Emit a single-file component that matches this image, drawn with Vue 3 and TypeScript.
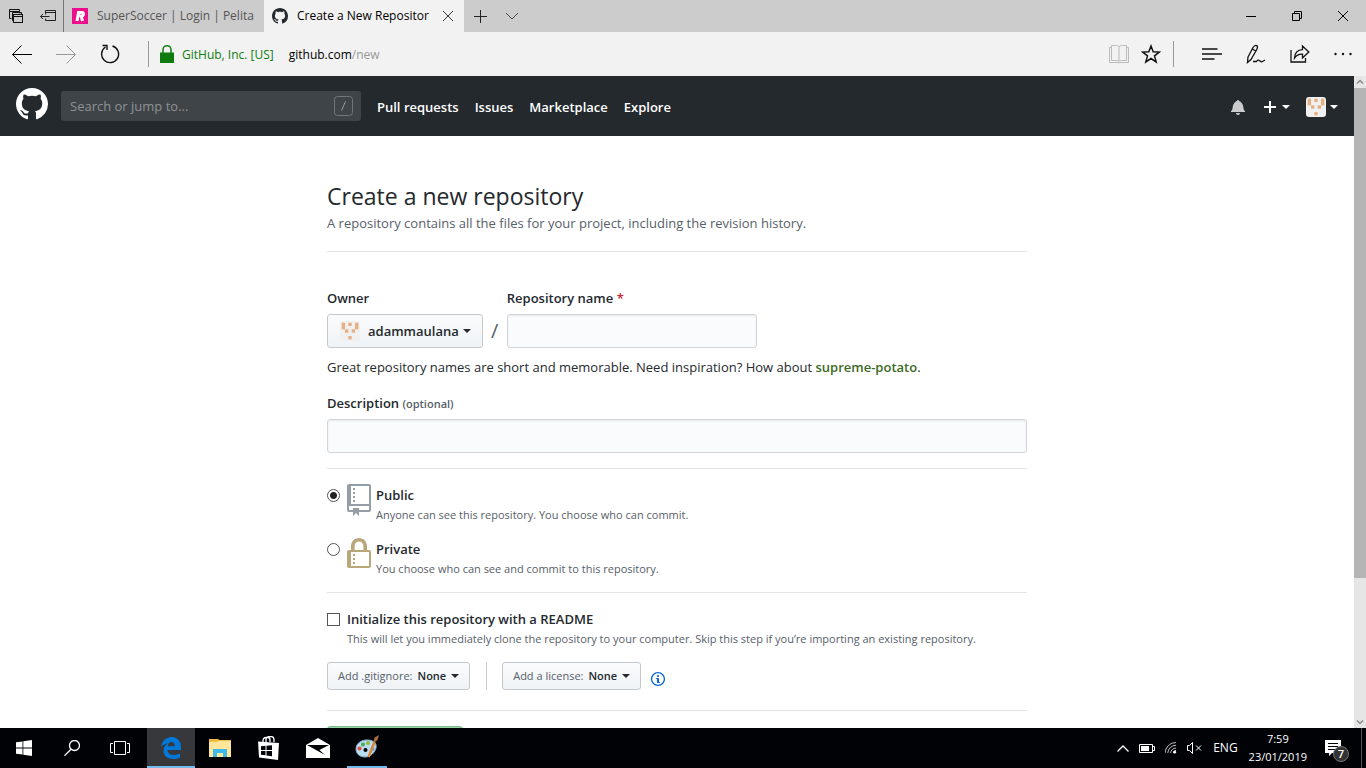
<script setup lang="ts">
import { ref } from 'vue'

interface Cell { x: number; y: number }

const identicon: Cell[] = [
  { x: 0, y: 0 }, { x: 0, y: 1 }, { x: 2, y: 0 }, { x: 4, y: 0 }, { x: 4, y: 1 },
  { x: 1, y: 2 }, { x: 3, y: 2 }, { x: 2, y: 4 },
]
const navLinks: string[] = ['Pull requests', 'Issues', 'Marketplace', 'Explore']
const visibility = ref<'public' | 'private'>('public')
const repoName = ref('')
const description = ref('')
const search = ref('')
const readme = ref(false)
const markPath = 'M8 0C3.58 0 0 3.58 0 8c0 3.54 2.29 6.53 5.47 7.59.4.07.55-.17.55-.38 0-.19-.01-.82-.01-1.49-2.01.37-2.53-.49-2.69-.94-.09-.23-.48-.94-.82-1.13-.28-.15-.68-.52-.01-.53.63-.01 1.08.58 1.23.82.72 1.21 1.87.87 2.33.66.07-.52.28-.87.51-1.07-1.78-.2-3.64-.89-3.64-3.95 0-.87.31-1.59.82-2.15-.08-.2-.36-1.02.08-2.12 0 0 .67-.21 2.2.82.64-.18 1.32-.27 2-.27.68 0 1.36.09 2 .27 1.53-1.04 2.2-.82 2.2-.82.44 1.1.16 1.92.08 2.12.51.56.82 1.27.82 2.15 0 3.07-1.87 3.75-3.65 3.95.29.25.54.73.54 1.48 0 1.07-.01 1.93-.01 2.2 0 .21.15.46.55.38A8.013 8.013 0 0 0 16 8c0-4.42-3.58-8-8-8z'
</script>

<template>
  <div class="screen">
    <div class="tabs">
      <div class="tab-tools">
        <button class="icon-btn" aria-label="Tabs you've set aside">
          <svg width="16" height="16" viewBox="0 0 16 16" fill="none" stroke="#111"><path d="M3.500 10.500h-2v-9h10v2M1.500 3.500h10M12 5.500v-.5M6.500 12.500h-2v-8h9v2" /><rect x="5.500" y="6.500" width="9" height="8" fill="#ccc" /><path d="M5.500 8.500h9" /></svg>
        </button>
        <button class="icon-btn" aria-label="Set these tabs aside">
          <svg width="18" height="16" viewBox="0 0 18 16" fill="none" stroke="#222"><path d="M6.500 6.500v-4h10v10h-10v-2M6.500 4.500h10M1.500 8.500h9M4 6l-2.500 2.500L4 11" /></svg>
        </button>
      </div>
      <button class="tab">
        <svg width="16" height="16" viewBox="0 0 16 16"><path fill="#ec0f8c" d="M0 0h16v16H0z" /><path fill="none" stroke="#fff" stroke-width="3" d="M5 13 6.500 4.500h3.700c1.800 0 1.600 3.500-.8 3.500H7.500M9.200 8l1.300 5" /></svg>
        <span>SuperSoccer | Login | Pelita</span>
      </button>
      <div class="tab active">
        <svg width="16" height="16" viewBox="0 0 16 16"><path fill="#24292e" :d="markPath" /></svg>
        <span>Create a New Repositor</span>
        <button class="icon-btn close" aria-label="Close tab">
          <svg width="12" height="12" viewBox="0 0 12 12" stroke="#333" fill="none"><path d="M1 1l10 10M11 1L1 11" /></svg>
        </button>
      </div>
      <button class="icon-btn newtab" aria-label="New tab">
        <svg width="13" height="13" viewBox="0 0 13 13" stroke="#222" fill="none"><path d="M6.500 0v13M0 6.500h13" /></svg>
      </button>
      <button class="icon-btn preview" aria-label="Show tab previews">
        <svg width="14" height="8" viewBox="0 0 14 8" stroke="#444" fill="none"><path d="M1 1l6 6 6-6" /></svg>
      </button>
      <div class="window-btns">
        <button aria-label="Minimize"><svg width="10" height="10" viewBox="0 0 10 10" stroke="#000"><path d="M0 5.500h10" /></svg></button>
        <button aria-label="Restore"><svg width="10" height="10" viewBox="0 0 10 10" stroke="#000" fill="none"><path d="M.5 2.500h7v7h-7zM2.500 2.500v-2h7v7h-2" /></svg></button>
        <button aria-label="Close"><svg width="10" height="10" viewBox="0 0 10 10" stroke="#000" fill="none"><path d="M0 0l10 10M10 0L0 10" /></svg></button>
      </div>
    </div>

    <div class="address">
      <button class="icon-btn" aria-label="Back"><svg width="20" height="20" viewBox="0 0 20 20" stroke="#000" fill="none"><path d="M.7 10.500H20M9.500 1.500l-9 9 9 9" /></svg></button>
      <button class="icon-btn" aria-label="Forward"><svg width="20" height="20" viewBox="0 0 20 20" stroke="#999" fill="none"><path d="M0 10.500h19.300M10.500 1.500l9 9-9 9" /></svg></button>
      <button class="icon-btn" aria-label="Refresh"><svg width="20" height="20" viewBox="0 0 20 20" stroke="#111" stroke-width="1.400" fill="none"><path d="M12.500 2A8.500 8.500 0 1 1 5.500 3M2.500 1.500h4.500v4.500" /></svg></button>
      <span class="bar-rule"></span>
      <svg class="lock" width="14" height="18" viewBox="0 0 14 18"><path d="M3 8V4.500a4 3.700 0 0 1 8 0V8" fill="none" stroke="#107c10" stroke-width="1.500" /><path d="M0 7.500h14V18H0z" fill="#107c10" /></svg>
      <span class="cert">GitHub, Inc. [US]</span>
      <span class="url">github.com<i>/new</i></span>
      <div class="tools">
        <button class="icon-btn" aria-label="Reading view"><svg width="20" height="20" viewBox="0 0 20 20" fill="none" stroke="#bbb"><path d="M2.500 1.500h5q2 0 2.500 1.500 .5-1.500 2.500-1.500h5v15h-5q-2 0-2.500 1-.5-1-2.500-1h-5zM10 3v14M2 3.500H.5v15h8.500q1 .8 2 0h8.500v-15H18" /></svg></button>
        <button class="icon-btn" aria-label="Add to favorites"><svg width="20" height="20" viewBox="0 0 20 20" fill="none" stroke="#111" stroke-width="1.500"><path d="M10 2l2.200 5.800 6.100.3-4.800 3.800 1.700 6L10 14.500l-5.200 3.400 1.700-6-4.800-3.800 6.100-.3z" /></svg></button>
        <span class="bar-rule"></span>
        <button class="icon-btn" aria-label="Hub"><svg width="20" height="12" viewBox="0 0 20 12" stroke="#111" stroke-width="1.300"><path d="M0 1h15.500M0 6h20M0 11h12.500" /></svg></button>
        <button class="icon-btn" aria-label="Make a web note"><svg width="20" height="20" viewBox="0 0 20 20" fill="none" stroke="#111" stroke-width="1.300"><path d="M2 13 7 3.500Q9 .5 10.700 1.600T10.500 6L5 15.500l-3.500 3zM6.300 5l3.500 2M7 17.500h3.500q1.500-2.300 3.200-.8t2.800.8 2.500-1.300" /></svg></button>
        <button class="icon-btn" aria-label="Share"><svg width="20" height="20" viewBox="0 0 20 20" fill="none" stroke="#111" stroke-width="1.300"><path d="M1 6v12h14.500v-4M4.500 14q.5-8 8-8.300V2l6.300 6-6.300 6v-3.800q-5-.4-8 3.800z" /></svg></button>
        <button class="icon-btn" aria-label="More"><svg width="18" height="4" viewBox="0 0 18 4" fill="#111"><circle cx="1.500" cy="2" r="1.200" /><circle cx="9" cy="2" r="1.200" /><circle cx="16.500" cy="2" r="1.200" /></svg></button>
      </div>
    </div>

    <div class="viewport">
      <div class="page">
        <header class="gh-header">
          <a href="#" aria-label="GitHub"><svg class="block" width="32" height="32" viewBox="0 0 16 16"><path fill="#fff" :d="markPath" /></svg></a>
          <div class="search">
            <input v-model="search" type="text" aria-label="Search" placeholder="Search or jump to..." />
            <svg width="19" height="20" viewBox="0 0 19 20" fill="none" stroke="#6f757a"><rect x=".5" y=".5" width="18" height="19" rx="3" /><path d="M11.500 5.500l-4 9" stroke="#979da2" /></svg>
          </div>
          <nav>
            <a v-for="link in navLinks" :key="link" href="#">{{ link }}</a>
          </nav>
          <div class="user-tools">
            <button class="icon-btn bell" aria-label="Notifications"><svg width="14" height="16" viewBox="0 0 14 16"><path fill="#c9cbcd" d="M13.990 11.991v1H0v-1l.73-.58c.769-.769.809-2.547 1.189-4.416.77-3.767 4.077-4.996 4.077-4.996 0-.55.45-1 .999-1 .55 0 1 .45 1 1 0 0 3.387 1.229 4.156 4.996.38 1.879.42 3.657 1.190 4.417l.659.58h-.01zM6.995 15.990c1.110 0 1.999-.89 1.999-1.999H4.996c0 1.110.89 1.999 1.999 1.999z" /></svg></button>
            <button class="icon-btn" aria-label="Create new"><svg width="12" height="12" viewBox="0 0 12 12" stroke="#fff" stroke-width="2"><path d="M6 0v12M0 6h12" /></svg><span class="caret"></span></button>
            <button class="icon-btn profile" aria-label="View profile"><svg width="20" height="20" viewBox="0 0 20 20"><rect width="20" height="20" rx="3" fill="#f0f0f0" /><rect v-for="(c, i) in identicon" :key="i" :x="1.700 + c.x * 3.330" :y="1.700 + c.y * 3.330" width="3.330" height="3.330" fill="#e6af82" /></svg><span class="caret"></span></button>
          </div>
        </header>

        <form class="form" @submit.prevent>
          <div class="heading">
            <h1>Create a new repository</h1>
            <p>A repository contains all the files for your project, including the revision history.</p>
          </div>

          <div class="name-row">
            <div class="field">
              <label for="owner">Owner</label>
              <button id="owner" type="button" class="btn owner" aria-haspopup="true">
                <svg width="20" height="20" viewBox="0 0 20 20"><rect width="20" height="20" rx="3" fill="#f0f0f0" /><rect v-for="(c, i) in identicon" :key="i" :x="1.700 + c.x * 3.330" :y="1.700 + c.y * 3.330" width="3.330" height="3.330" fill="#e6af82" /></svg>
                <b>adammaulana</b><span class="caret"></span>
              </button>
            </div>
            <span class="slash">/</span>
            <div class="field">
              <label for="repo">Repository name <em>*</em></label>
              <input id="repo" v-model="repoName" type="text" class="text repo" />
            </div>
          </div>
          <p class="note">Great repository names are short and memorable. Need inspiration? How about <b>supreme-potato</b>.</p>

          <div class="field desc">
            <label for="desc">Description <small>(optional)</small></label>
            <input id="desc" v-model="description" type="text" class="text" />
          </div>

          <div class="section choices">
            <div class="choice">
              <input id="public" v-model="visibility" type="radio" name="visibility" value="public" />
              <svg width="24" height="32" viewBox="0 0 12 16"><path fill="#959da5" d="M4 9H3V8h1v1zm0-3H3v1h1V6zm0-2H3v1h1V4zm0-2H3v1h1V2zm8-1v12c0 .55-.45 1-1 1H6v2l-1.500-1.500L3 16v-2H1c-.55 0-1-.45-1-1V1c0-.55.45-1 1-1h10c.55 0 1 .45 1 1zm-1 10H1v2h2v-1h3v1h5v-2zm0-10H2v9h9V1z" /></svg>
              <div><label for="public">Public</label><p>Anyone can see this repository. You choose who can commit.</p></div>
            </div>
            <div class="choice">
              <input id="private" v-model="visibility" type="radio" name="visibility" value="private" />
              <svg width="24" height="32" viewBox="0 0 12 16"><path fill="#b9a779" d="M4 13H3v-1h1v1zm8-6v7c0 .55-.45 1-1 1H1c-.55 0-1-.45-1-1V7c0-.55.45-1 1-1h1V4c0-2.200 1.800-4 4-4s4 1.800 4 4v2h1c.55 0 1 .45 1 1zM3.800 6h4.410V4c0-1.220-.98-2.200-2.200-2.200-1.220 0-2.200.98-2.200 2.200v2H3.800zM11 7H2v7h9V7zM4 8H3v1h1V8zm0 2H3v1h1v-1z" /></svg>
              <div><label for="private">Private</label><p>You choose who can see and commit to this repository.</p></div>
            </div>
          </div>

          <div class="section init">
            <div class="choice readme">
              <input id="readme" v-model="readme" type="checkbox" />
              <div><label for="readme">Initialize this repository with a README</label><p>This will let you immediately clone the repository to your computer. Skip this step if you’re importing an existing repository.</p></div>
            </div>
            <div class="menus">
              <button type="button" class="btn small" aria-haspopup="true">Add .gitignore: <b>None</b><span class="caret"></span></button>
              <span class="divider"></span>
              <button type="button" class="btn small" aria-haspopup="true">Add a license: <b>None</b><span class="caret"></span></button>
              <svg class="info" width="14" height="16" viewBox="0 0 14 16"><path fill="#0366d6" d="M6.300 5.690a.942.942 0 0 1-.28-.7c0-.28.09-.52.28-.7.19-.18.42-.28.7-.28.28 0 .52.09.7.28.18.19.28.42.28.7 0 .28-.09.52-.28.7a1 1 0 0 1-.7.3c-.28 0-.52-.11-.7-.3zM8 7.990c-.02-.25-.11-.48-.31-.69-.2-.19-.42-.3-.69-.31H6c-.27.02-.48.13-.69.31-.2.2-.3.44-.31.69h1v3c.02.27.11.5.31.69.2.2.42.31.69.31h1c.27 0 .48-.11.69-.31.2-.19.3-.42.31-.69H8V7.980v.01zM7 2.300c-3.140 0-5.700 2.540-5.700 5.680 0 3.140 2.560 5.700 5.700 5.700s5.700-2.550 5.700-5.700c0-3.150-2.560-5.690-5.700-5.690v.01zM7 .98c3.860 0 7 3.140 7 7s-3.140 7-7 7-7-3.120-7-7 3.140-7 7-7z" /></svg>
            </div>
          </div>

          <div class="section submit-row">
            <button type="submit" class="submit" disabled aria-label="Create repository"></button>
          </div>
        </form>
      </div>
      <div class="scrollbar">
        <svg width="12" height="12" viewBox="0 0 12 12" fill="none" stroke="#8a8a8a" stroke-width="1.500"><path d="M3 7.500l3-3 3 3" /></svg>
        <div class="track"><div class="thumb"></div></div>
        <svg width="12" height="12" viewBox="0 0 12 12" fill="none" stroke="#8a8a8a" stroke-width="1.500"><path d="M3 4.500l3 3 3-3" /></svg>
      </div>
    </div>

    <div class="taskbar">
      <button class="task" aria-label="Start"><svg width="16" height="16" viewBox="0 0 16 16" fill="#fff"><path d="M0 2.300 6.500 1.400v6.200H0zM7.300 1.300 16 0v7.600H7.300zM0 8.400h6.500v6.200L0 13.700zM7.300 8.400H16V16l-8.700-1.300z" /></svg></button>
      <button class="task" aria-label="Search"><svg width="16" height="16" viewBox="0 0 16 16" fill="none" stroke="#fff" stroke-width="1.300"><circle cx="10.500" cy="5.500" r="5" /><path d="M7 9.200.5 15.700" /></svg></button>
      <button class="task" aria-label="Task view"><svg width="20" height="14" viewBox="0 0 20 14" fill="none" stroke="#fff"><path d="M4.500.5h11v13h-11zM3 2.500H.5v9H3M17 2.500h2.500v9H17" /></svg></button>
      <button class="task open" aria-label="Microsoft Edge"><svg width="20" height="22" viewBox="0 0 20 22" fill="#0078d7"><path d="M0 10C1.200 3.500 5.500 0 10.500 0 16.500 0 20 4.500 20 10v3H6.500c.3 3.800 3.500 5 6.500 5 2.500 0 4.300-.6 6-1.700v4.200c-2.200 1-4.500 1.500-7.200 1.500C5.500 22 2.500 18 2.500 13.800 2.500 10.500 4.200 7.800 7 6.300 4 6.700 1.600 8 0 10zm6.700-.8h7.200C13.900 6.500 12.700 5 10.500 5 8.300 5 7 6.700 6.700 9.200z" /></svg></button>
      <button class="task explorer" aria-label="File Explorer"><svg width="22" height="18" viewBox="0 0 22 18"><path fill="#f0bd44" d="M0 0h9l1.500 1H22v3H0z" /><path fill="#ffe69b" d="M0 3h8l2-1h12v16H0z" /><path fill="#3db8ea" d="M4 10h14v8h-4v-4H8v4H4z" /></svg></button>
      <button class="task" aria-label="Microsoft Store"><svg width="22" height="24" viewBox="0 0 22 24"><path fill="none" stroke="#fff" stroke-width="1.300" d="M5 7V5q0-3.500 3-3.500h2Q12 1.500 12 4v2M8 6V3.500Q8.500.7 11 .7h2.500Q16 .7 16 4v2" /><path fill="#fff" d="M0 5.500 21 7l-1 17L1 21.500z" /><path fill="#000206" d="M3 10.300 7.500 9.800v4.300H3zM8.500 9.700l5.500-.5v4.900H8.500zM3 15h4.500v4.300L3 18.700zM8.500 15H14v5.200l-5.500-.8z" /></svg></button>
      <button class="task" aria-label="Mail"><svg width="24" height="20" viewBox="0 0 24 20"><path fill="#fff" d="M0 7 12 0l12 7v13H0z" /><path fill="#000206" d="M1 7h22l-9.500 5L19 17z" /></svg></button>
      <button class="task paint" aria-label="Paint"><svg width="24" height="24" viewBox="0 0 24 24"><path fill="#b9dcf0" stroke="#83afd0" d="M1 14C1 8 7 4.500 13 5c7 .5 9 4.500 8 8-1 4-5 9-11 9-5 0-9-3-9-8z" /><circle cx="4.500" cy="13.500" r="2" fill="#df4d3e" /><circle cx="8" cy="9.500" r="2" fill="#4da853" /><circle cx="13" cy="8" r="2" fill="#8dbb3c" /><circle cx="10.500" cy="15" r="2" fill="#000206" /><circle cx="17.500" cy="14" r="2" fill="#5aa3d8" /><path stroke="#dd8739" stroke-width="2.500" d="M13.500 22 19.500 7" /><path fill="#a66a3c" d="m18.500 6 1-3.500L24 0l-1.500 5-3 2.500z" /></svg></button>
      <div class="tray">
        <div class="status">
          <svg width="12" height="7" viewBox="0 0 12 7" fill="none" stroke="#fff" stroke-width="1.300"><path d="M.5 6.500 6 1l5.500 5.500" /></svg>
          <svg width="16" height="9" viewBox="0 0 16 9"><path fill="none" stroke="#fff" d="M.5.500h13v8H.5zM14 2.500h1.500v4H14" /><path fill="#fff" d="M2 2h8v5H2z" /></svg>
          <svg width="12" height="12" viewBox="1 1 13 13" fill="none" stroke="#ccc"><path d="M1 13A12 12 0 0 1 13 1.500M4 13a9 9 0 0 1 9-8.500M7 13a6 6 0 0 1 6-5.500" /><path d="M10 13a3 3 0 0 1 3-3" /><circle cx="11.500" cy="12" r="1.500" fill="#fff" stroke="none" /></svg>
          <svg width="15" height="12" viewBox="0 0 15 12" fill="none" stroke="#fff"><path d="M.5 3.500h2l3-3v11l-3-3h-2zM9 3.500l5 5M14 3.500l-5 5" /></svg>
        </div>
        <span class="lang">ENG</span>
        <div class="clock"><span>7:59</span><span>23/01/2019</span></div>
        <button class="notice" aria-label="7 new notifications">
          <svg width="16" height="16" viewBox="0 0 16 16"><path fill="#fff" d="M0 0h16v13H7l-3 3v-3H0z" /><path stroke="#000206" d="M3 3.500h10M3 6.500h10M3 9.500h7" /></svg>
          <span class="count">7</span>
        </button>
        <span class="peek"></span>
      </div>
    </div>
  </div>
</template>

<style>
html, body { margin: 0; }
</style>

<style scoped>
.screen, .screen * { box-sizing: border-box; }
.screen { height: 100vh; display: flex; flex-direction: column; overflow: hidden; font-family: "Segoe UI", "Open Sans", "Noto Sans", sans-serif; font-size: 13px; line-height: 20px; color: #24292e; background: #fff; }
button { font: inherit; color: inherit; border: 0; background: none; padding: 0; margin: 0; }
svg { flex: none; }
p, h1 { margin: 0; }
b, label { font-weight: 600; }
a { text-decoration: none; color: inherit; }
.block { display: block; }
.icon-btn { display: flex; align-items: center; gap: 6px; }

.tabs { flex: none; height: 32px; display: flex; background: #ccc; font-size: 12px; color: #555; white-space: nowrap; }
.tab-tools { display: flex; align-items: center; gap: 15px; width: 64px; padding-left: 8px; border-right: 1px solid #777; }
.tab { display: flex; align-items: center; gap: 9px; width: 200px; padding-left: 8px; text-align: left; }
.tab.active { background: #f2f2f2; color: #000; }
.tab.active .close { margin-left: auto; padding-right: 10px; }
.newtab { margin-left: 10px; }
.preview { margin-left: 18px; }
.window-btns { margin-left: auto; display: flex; }
.window-btns button { width: 46px; display: flex; align-items: center; justify-content: center; }

.address { flex: none; height: 44px; display: flex; align-items: center; padding: 0 14px 0 12px; background: #f2f2f2; font-size: 12px; line-height: 22px; }
.address > .icon-btn { margin-right: 24px; }
.bar-rule { width: 1px; height: 26px; background: #999; }
.address > .bar-rule { margin-left: 4px; }
.lock { margin: 0 8px 0 11px; }
.cert { color: #107c10; margin-right: 15px; padding-top: 1px; }
.url { color: #000; padding-top: 1px; }
.url i { font-style: normal; color: #999; }
.tools { margin-left: auto; display: flex; align-items: center; }
.tools .icon-btn + .icon-btn { margin-left: 24px; }
.tools .icon-btn:nth-child(2) { margin-left: 12px; }
.tools .bar-rule { margin: 0 28px 0 12px; }

.viewport { flex: 1; min-height: 0; display: flex; }
.page { flex: 1; min-width: 0; overflow: hidden; }
.gh-header { height: 60px; padding: 0 16px; display: flex; align-items: center; background: #24292e; color: #fff; font-weight: 600; }
.gh-header > a { margin-bottom: 4px; }
.search { width: 300px; height: 30px; margin: 0 16px 0 13px; padding: 0 8px 0 9px; display: flex; align-items: center; background: #3f4448; border-radius: 3px; }
.search input { flex: 1; min-width: 0; border: 0; padding: 0; outline: 0; background: none; color: #fff; font: inherit; font-weight: 400; }
.search input::placeholder { color: #8f9295; opacity: 1; }
.gh-header nav { display: flex; gap: 16px; margin-top: 2px; }
.user-tools { margin: 2px 0 0 auto; display: flex; align-items: center; gap: 16px; }
.bell { margin-right: 3px; }
.profile { gap: 4px; }
.caret { width: 0; height: 0; border: 4px solid transparent; border-top-color: currentColor; border-bottom: 0; }

.form { max-width: 700px; margin: 0 auto; padding-top: 44px; }
.heading { padding-bottom: 17px; border-bottom: 1px solid #e1e4e8; }
h1 { font-size: 23px; line-height: 32px; font-weight: 400; }
.heading p { color: #586069; line-height: 22px; }
.name-row { display: flex; align-items: flex-end; margin-top: 36px; }
.field { display: flex; flex-direction: column; align-items: flex-start; gap: 6px; }
.field em { color: #cb2431; font-style: normal; }
.btn { display: flex; align-items: center; border: 1px solid #c5c9cd; border-radius: 3px; background: linear-gradient(#fafbfc, #eff3f6); white-space: nowrap; }
.owner { height: 34px; padding: 0 11px 0 12px; gap: 4px; }
.owner svg { margin-right: 4px; }
.slash { width: 24px; line-height: 34px; font-size: 20px; text-align: center; color: #586069; }
.text { width: 100%; height: 34px; border: 1px solid #d1d5da; border-radius: 3px; background: #fafbfc; padding: 0 8px; font: inherit; box-shadow: inset 0 1px 2px rgba(27, 31, 35, .075); }
.repo { width: 250px; }
.note { margin-top: 9px; }
.note b { color: #3b6b25; }
.desc { margin: 16px 0 15px; align-items: stretch; }
.desc small { font-size: 11px; line-height: 16px; color: #586069; }
.section { border-top: 1px solid #e1e4e8; }
.choices { padding: 16px 0 13px; display: flex; flex-direction: column; gap: 14px; }
.choice { height: 40px; display: flex; align-items: flex-start; }
.choice input { appearance: none; width: 13px; height: 13px; margin: 4px 7px 0 0; border: 1px solid #555; background: #fff; }
.choice input[type="radio"] { border-radius: 50%; }
.choice input[type="radio"]:checked { background: radial-gradient(circle, #222 3px, #fff 4px); }
.choice svg { margin: -1px 5px 0 0; }
.choice p { font-size: 11px; color: #586069; }
.choice label { display: block; }
.init { padding: 16px 0 20px; }
.menus { display: flex; margin-top: 13px; }
.small { height: 28px; padding: 0 10px; gap: 5px; font-size: 11px; color: #586069; }
.small b, .small .caret { color: #24292e; }
.divider { width: 1px; margin: 0 15px 0 16px; background: #c6cbd1; }
.info { margin: 9px 0 0 10px; }
.submit-row { padding-top: 15px; }
.submit { display: block; width: 136px; height: 34px; border: 1px solid #7fbf8f; border-radius: 3px; background: #94d3a2; }

.scrollbar { flex: none; width: 12px; display: flex; flex-direction: column; background: #e6e6e6; }
.track { flex: 1; }
.thumb { height: 78%; background: #b5b5b5; }

.taskbar { flex: none; height: 40px; display: flex; background: #000206; color: #fff; font-size: 11px; }
.task { width: 48px; display: flex; align-items: center; justify-content: center; }
.task:nth-child(n+4) { margin-left: 3px; width: 46px; }
.task.open { width: 48px; padding-top: 2px; background: #36383c; border-bottom: 2px solid #76b9ed; }
.task.explorer { margin-left: 2px; }
.task.paint { width: 40px; margin-left: 6px; border-bottom: 2px solid #76b9ed; }
.tray { margin-left: auto; display: flex; align-items: center; gap: 11px; }
.status { display: flex; align-items: center; gap: 10px; }
.lang { font-size: 12px; }
.clock { display: flex; flex-direction: column; align-items: center; line-height: 18px; }
.notice { position: relative; display: flex; margin: 0 9px 0 7px; }
.count { position: absolute; left: 8px; top: 6px; width: 16px; height: 16px; border-radius: 50%; background: #333; border: 1px solid #777; line-height: 14px; font-size: 11px; font-weight: 600; }
.peek { align-self: stretch; width: 5px; border-left: 1px solid #555; }
</style>
